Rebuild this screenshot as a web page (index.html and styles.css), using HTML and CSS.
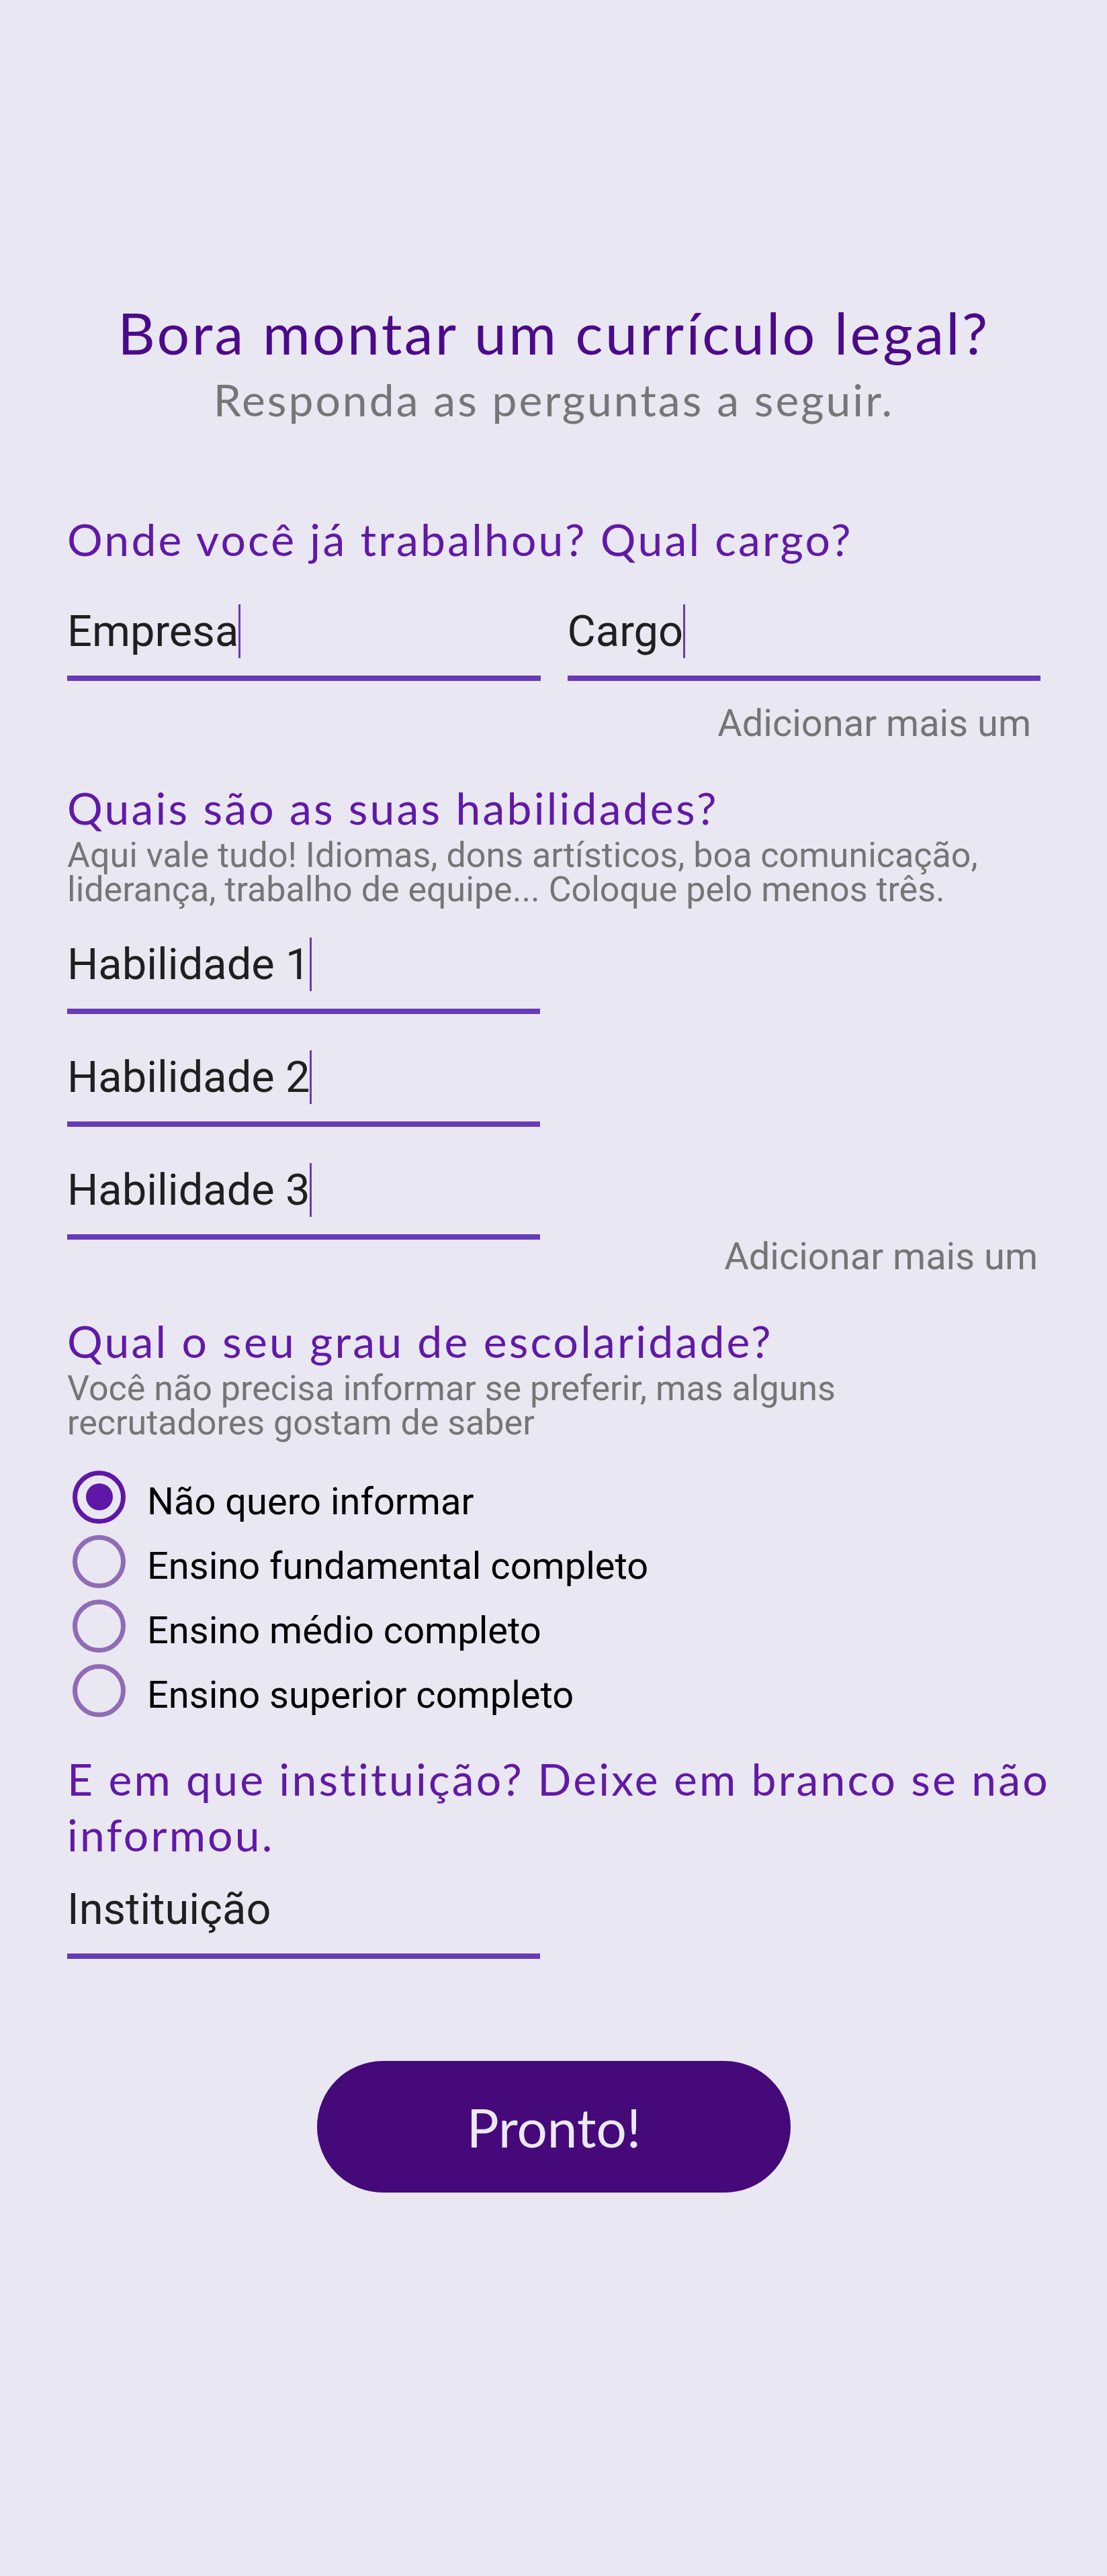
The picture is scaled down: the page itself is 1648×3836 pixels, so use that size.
FILE: index.html
```html
<!DOCTYPE html>
<html lang="pt-BR">
<head>
<meta charset="utf-8">
<title>Currículo</title>
<link rel="stylesheet" href="styles.css">
</head>
<body>
<main class="page">
  <header class="intro">
    <h1 class="title">Bora montar um currículo legal?</h1>
    <p class="subtitle">Responda as perguntas a seguir.</p>
  </header>

  <section class="block block-work">
    <h2 class="question">Onde você já trabalhou? Qual cargo?</h2>
    <div class="pair">
      <div class="field">
        <div class="field-text">Empresa<span class="caret"></span></div>
        <div class="field-line"></div>
      </div>
      <div class="field">
        <div class="field-text">Cargo<span class="caret"></span></div>
        <div class="field-line"></div>
      </div>
    </div>
    <div class="add-more add-work">Adicionar mais um</div>
  </section>

  <section class="block block-skills">
    <h2 class="question">Quais são as suas habilidades?</h2>
    <p class="hint">Aqui vale tudo! Idiomas, dons artísticos, boa comunicação, liderança, trabalho de equipe... Coloque pelo menos três.</p>
    <div class="skill-list">
      <div class="field field-single">
        <div class="field-text">Habilidade 1<span class="caret"></span></div>
        <div class="field-line"></div>
      </div>
      <div class="field field-single">
        <div class="field-text">Habilidade 2<span class="caret"></span></div>
        <div class="field-line"></div>
      </div>
      <div class="field field-single">
        <div class="field-text">Habilidade 3<span class="caret"></span></div>
        <div class="field-line"></div>
      </div>
    </div>
    <div class="add-more add-skill">Adicionar mais um</div>
  </section>

  <section class="block block-school">
    <h2 class="question">Qual o seu grau de escolaridade?</h2>
    <p class="hint">Você não precisa informar se preferir, mas alguns recrutadores gostam de saber</p>
    <div class="radio-group">
      <div class="radio-row">
        <span class="radio radio-on"><span class="radio-dot"></span></span>
        <span class="radio-label">Não quero informar</span>
      </div>
      <div class="radio-row">
        <span class="radio"></span>
        <span class="radio-label">Ensino fundamental completo</span>
      </div>
      <div class="radio-row">
        <span class="radio"></span>
        <span class="radio-label">Ensino médio completo</span>
      </div>
      <div class="radio-row">
        <span class="radio"></span>
        <span class="radio-label">Ensino superior completo</span>
      </div>
    </div>
  </section>

  <section class="block block-inst">
    <h2 class="question">E em que instituição? Deixe em branco se não informou.</h2>
    <div class="field field-single inst-field">
      <div class="field-text">Instituição</div>
      <div class="field-line"></div>
    </div>
  </section>

  <div class="actions">
    <button class="done" type="button">Pronto!</button>
  </div>
</main>
</body>
</html>
```

FILE: styles.css
```css
html, body {
  margin: 0;
  padding: 0;
}

body {
  background: #e9e7f2;
  font-family: Roboto, "Liberation Sans", Arial, sans-serif;
}

.page {
  box-sizing: border-box;
  min-height: 3836px;
  padding: 443px 99px 0 100px;
}

.intro {
  text-align: center;
}

.title {
  margin: 0;
  font-family: Lato, "Open Sans", sans-serif;
  font-weight: 400;
  font-size: 86px;
  line-height: 104px;
  letter-spacing: 3.3px;
  color: #4b0a8a;
}

.subtitle {
  margin: 8px 0 0;
  font-family: Lato, "Open Sans", sans-serif;
  font-size: 66px;
  line-height: 80px;
  letter-spacing: 3px;
  color: #767676;
}

.question {
  margin: 0 -60px 0 0;
  font-family: Lato, "Open Sans", sans-serif;
  font-weight: 400;
  font-size: 66px;
  line-height: 83px;
  letter-spacing: 3.2px;
  color: #6119a8;
}

.block-work {
  margin-top: 126px;
}

.block-skills,
.block-school {
  margin-top: 51px;
}

.block-inst {
  margin-top: 42px;
}

.hint {
  max-width: 1400px;
  margin: 4px 0 0;
  font-size: 52px;
  line-height: 51px;
  color: #757575;
}

.pair {
  display: grid;
  grid-template-columns: 1fr 1fr;
  column-gap: 40px;
  margin-top: 56px;
}

.field-single {
  width: 704px;
}

.field-text {
  height: 80px;
  font-size: 65px;
  line-height: 80px;
  color: #1f1f1f;
  white-space: nowrap;
}

.caret {
  display: inline-block;
  width: 3px;
  height: 80px;
  vertical-align: top;
  background: #673ab7;
}

.field-line {
  height: 8px;
  margin-top: 26px;
  background: #673ab7;
}

.skill-list {
  display: flex;
  flex-direction: column;
  gap: 54px;
  margin-top: 46px;
}

.add-more {
  font-size: 56px;
  line-height: 66px;
  color: #757575;
  text-align: right;
}

.add-work {
  margin-top: 30px;
  padding-right: 14px;
}

.add-skill {
  margin-top: -8px;
  padding-right: 4px;
}

.radio-group {
  display: flex;
  flex-direction: column;
  margin-top: 37px;
}

.radio-row {
  display: flex;
  align-items: center;
  height: 96px;
}

.radio {
  box-sizing: border-box;
  display: flex;
  align-items: center;
  justify-content: center;
  flex: none;
  width: 79px;
  height: 79px;
  margin-left: 8px;
  border: 7px solid #8f6cb5;
  border-radius: 50%;
}

.radio-on {
  border-color: #5e17a6;
}

.radio-dot {
  width: 40px;
  height: 40px;
  border-radius: 50%;
  background: #5e17a6;
}

.radio-label {
  margin-left: 32px;
  padding-top: 14px;
  font-size: 56px;
  line-height: 66px;
  color: #000;
  white-space: nowrap;
}

.inst-field {
  margin-top: 30px;
}

.actions {
  display: flex;
  justify-content: center;
  margin-top: 152px;
}

.done {
  width: 705px;
  height: 196px;
  padding: 0;
  border: 0;
  border-radius: 98px;
  background: #45097a;
  color: #ece9f4;
  font-family: Lato, "Open Sans", sans-serif;
  font-size: 80px;
  line-height: 1;
  cursor: pointer;
}
```
